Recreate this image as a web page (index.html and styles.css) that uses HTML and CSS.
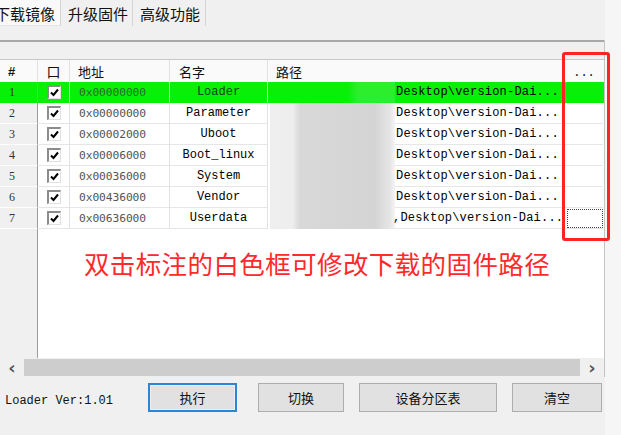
FILE: index.html
```html
<!DOCTYPE html>
<html lang="zh-CN">
<head>
<meta charset="utf-8">
<link rel="stylesheet" href="styles.css">
</head>
<body>
<div class="win">
  <div class="tabs">
    <div class="tab sel">下载镜像</div>
    <div class="tab">升级固件</div>
    <div class="tab">高级功能</div>
  </div>
  <div class="list">
    <div class="strip"></div>
    <div class="row head">
      <div class="c num">#</div>
      <div class="c chk">口</div>
      <div class="c addr">地址</div>
      <div class="c name hname">名字</div>
      <div class="c path"><span class="hp">路径</span></div>
      <div class="c last dots">...</div>
    </div>
    <div class="row green">
      <div class="c num">1</div>
      <div class="c chk"><span class="box"><svg viewBox="0 0 11 11" width="11" height="11"><path d="M2 5.5 L4.5 8 L9 2.5" fill="none" stroke="#000" stroke-width="2"/></svg></span></div>
      <div class="c addr">0x00000000</div>
      <div class="c name">Loader</div>
      <div class="c path"><span class="blur"></span><span class="pt">Desktop\version-Dai...</span></div>
      <div class="c last"></div>
    </div>
    <div class="row">
      <div class="c num">2</div>
      <div class="c chk"><span class="box"><svg viewBox="0 0 11 11" width="11" height="11"><path d="M2 5.5 L4.5 8 L9 2.5" fill="none" stroke="#000" stroke-width="2"/></svg></span></div>
      <div class="c addr">0x00000000</div>
      <div class="c name">Parameter</div>
      <div class="c path"><span class="blur"></span><span class="pt">Desktop\version-Dai...</span></div>
      <div class="c last"></div>
    </div>
    <div class="row">
      <div class="c num">3</div>
      <div class="c chk"><span class="box"><svg viewBox="0 0 11 11" width="11" height="11"><path d="M2 5.5 L4.5 8 L9 2.5" fill="none" stroke="#000" stroke-width="2"/></svg></span></div>
      <div class="c addr">0x00002000</div>
      <div class="c name">Uboot</div>
      <div class="c path"><span class="blur"></span><span class="pt">Desktop\version-Dai...</span></div>
      <div class="c last"></div>
    </div>
    <div class="row">
      <div class="c num">4</div>
      <div class="c chk"><span class="box"><svg viewBox="0 0 11 11" width="11" height="11"><path d="M2 5.5 L4.5 8 L9 2.5" fill="none" stroke="#000" stroke-width="2"/></svg></span></div>
      <div class="c addr">0x00006000</div>
      <div class="c name">Boot_linux</div>
      <div class="c path"><span class="blur"></span><span class="pt">Desktop\version-Dai...</span></div>
      <div class="c last"></div>
    </div>
    <div class="row">
      <div class="c num">5</div>
      <div class="c chk"><span class="box"><svg viewBox="0 0 11 11" width="11" height="11"><path d="M2 5.5 L4.5 8 L9 2.5" fill="none" stroke="#000" stroke-width="2"/></svg></span></div>
      <div class="c addr">0x00036000</div>
      <div class="c name">System</div>
      <div class="c path"><span class="blur"></span><span class="pt">Desktop\version-Dai...</span></div>
      <div class="c last"></div>
    </div>
    <div class="row">
      <div class="c num">6</div>
      <div class="c chk"><span class="box"><svg viewBox="0 0 11 11" width="11" height="11"><path d="M2 5.5 L4.5 8 L9 2.5" fill="none" stroke="#000" stroke-width="2"/></svg></span></div>
      <div class="c addr">0x00436000</div>
      <div class="c name">Vendor</div>
      <div class="c path"><span class="blur"></span><span class="pt">Desktop\version-Dai...</span></div>
      <div class="c last"></div>
    </div>
    <div class="row">
      <div class="c num">7</div>
      <div class="c chk"><span class="box"><svg viewBox="0 0 11 11" width="11" height="11"><path d="M2 5.5 L4.5 8 L9 2.5" fill="none" stroke="#000" stroke-width="2"/></svg></span></div>
      <div class="c addr">0x00636000</div>
      <div class="c name">Userdata</div>
      <div class="c path"><span class="blur"></span><span class="pt comma">,Desktop\version-Dai...</span></div>
      <div class="c last"><span class="focus"></span></div>
    </div>
    <div class="empty">
      <div class="ecol"></div>
      <div class="earea"><p class="note">双击标注的白色框可修改下载的固件路径</p></div>
    </div>
    <div class="hscroll">
      <span class="arr">&lsaquo;</span>
      <span class="track"></span>
      <span class="arr">&rsaquo;</span>
    </div>
  </div>
  <div class="footer">
    <span class="ver">Loader Ver:1.01</span>
    <button class="btn b1 focused">执行</button>
    <button class="btn b2">切换</button>
    <button class="btn b3">设备分区表</button>
    <button class="btn b4">清空</button>
  </div>
  <div class="redbox"></div>
</div>
</body>
</html>
```
FILE: styles.css
```css
* { box-sizing: border-box; }
html, body { margin: 0; padding: 0; }
body {
  width: 621px;
  height: 435px;
  overflow: hidden;
  background: #f0f0f0;
  font-family: "Liberation Mono", "Noto Sans CJK SC", monospace;
}
.win {
  position: relative;
  width: 621px;
  height: 435px;
  background: linear-gradient(to right, #f0f0f0 0, #f0f0f0 605px, #f6f6f6 605px);
}
.tabs {
  display: flex;
  height: 26px;
  margin-bottom: 14px;
  margin-left: -8px;
}
.tab {
  font-family: "Noto Sans CJK SC", sans-serif;
  font-size: 15px;
  line-height: 27px;
  height: 26px;
  padding: 0 4px 0 7px;
  color: #111;
  border-right: 1px solid #d4d4d4;
  background: #f0f0f0;
  white-space: nowrap;
}
.tab.sel {
  background: #f9f9f9;
  padding: 0 5px 0 3px;
  border-bottom: 1px solid #e4e4e4;
}
.tab:last-child { padding-right: 5px; }
.list {
  width: 605px;
  border-right: 1px solid #c4c4c4;
  display: flex;
  flex-direction: column;
  background: #fff;
}
.strip {
  height: 20px;
  background: #f0f0f0;
  border-top: 2px solid #a8a8a8;
  border-bottom: 1px solid #c8c8c8;
}
.row {
  display: grid;
  grid-template-columns: 38px 32px 100px 98px 297px 38px;
  height: 21px;
  background: #fff;
}
.row.head {
  height: 22px;
  background: #fafafa;
}
.c {
  display: flex;
  align-items: center;
  border-right: 1px solid #e2e2e2;
  border-bottom: 1px solid #e6e6e6;
  font-size: 12px;
  color: #000;
  white-space: nowrap;
  overflow: hidden;
}
.head .c {
  font-family: "Noto Sans CJK SC", sans-serif;
  font-size: 13px;
  border-bottom: none;
  color: #111;
}
.num {
  background: #f0f0f0;
  border-right: 1px solid #9c9c9c;
  border-bottom: 1px solid #fdfdfd;
  padding-left: 9px;
  font-family: "Liberation Serif", serif;
  font-size: 12px;
  color: #333;
}
.head .num { background: #fafafa; border-right-color: #e2e2e2; font-family: "Liberation Sans", sans-serif; font-weight: bold; padding-left: 8px; }
.chk { justify-content: center; }
.head .chk { font-size: 14px; padding-left: 0; }
.box {
  width: 14px;
  height: 14px;
  background: #fff;
  border-top: 2px solid #8c8c8c;
  border-left: 2px solid #8c8c8c;
  border-right: 1px solid #e0e0e0;
  border-bottom: 1px solid #e0e0e0;
  display: flex;
  align-items: center;
  justify-content: center;
}
.addr {
  padding-left: 9px;
  font-family: "DejaVu Sans Mono", monospace;
  font-size: 11.3px;
  color: #555;
  letter-spacing: -0.1px;
}
.head .addr { padding-left: 8px; }
.name {
  justify-content: center;
  font-size: 12px;
  color: #000;
}
.hname { justify-content: flex-start; padding-left: 9px; }
.path {
  padding: 0;
  border-bottom: none;
}
.hp { padding-left: 8px; }
.blur {
  width: 125px;
  height: 21px;
  margin-left: 2px;
  flex: none;
  background: linear-gradient(to right, #efefef 0, #eeeeee 18%, #d8d8d8 24%, #d4d4d4 84%, #e6e6e6 96%, #f4f4f4 100%);
}
.pt {
  flex: 1;
  height: 21px;
  line-height: 20px;
  border-bottom: 1px solid #e6e6e6;
  padding-left: 1px;
  font-size: 12px;
  color: #000;
  letter-spacing: 0.2px;
}
.pt.comma { margin-left: -3px; }
.last { justify-content: center; border-right: none; }
.dots { color: #8a8a8a; font-family: "Liberation Mono", monospace !important; font-size: 12px !important; padding-top: 4px; }
.focus {
  display: block;
  width: 36px;
  height: 19px;
  margin-left: 2px;
  border: 1px dotted #444;
}
.row.green, .row.green .c, .row.green .num { background: #08ef08; }
.row.green .c { border-bottom-color: #08ef08; }
.row.green .pt { border-bottom-color: #08ef08; }
.row.green .name { color: #154015; }
.row.green .addr { color: #2d6a2d; }
.row.green .blur {
  background: linear-gradient(to right, #08ef08 0, #08ef08 62%, #2cee2c 70%, #2cee2c 100%);
}
.empty {
  display: flex;
  height: 129px;
}
.ecol {
  width: 38px;
  background: #f0f0f0;
  border-right: 1px solid #9c9c9c;
}
.earea {
  flex: 1;
  background: #fff;
  border-right: 2px solid #fff;
}
.note {
  margin: 17px 0 0 0;
  text-align: center;
  font-family: "Noto Sans CJK SC", sans-serif;
  font-size: 25.5px;
  line-height: 34px;
  color: #ff2a2a;
  letter-spacing: 0.4px;
  padding-right: 6px;
}
.hscroll {
  height: 19px;
  display: flex;
  align-items: stretch;
  background: #f0f0f0;
}
.arr {
  width: 24px;
  display: flex;
  align-items: center;
  justify-content: center;
  font-family: "DejaVu Sans", sans-serif;
  font-size: 18px;
  font-weight: bold;
  color: #555;
  line-height: 1;
}
.track {
  flex: 1;
  margin: 1px 0;
  background: #cdcdcd;
}
.footer {
  display: flex;
  align-items: center;
  padding-top: 6px;
  height: 35px;
}
.ver {
  width: 148px;
  padding-left: 5px;
  padding-top: 6px;
  font-size: 12px;
  color: #111;
}
.btn {
  height: 29px;
  background: #e1e1e1;
  border: 1px solid #adadad;
  font-family: "Noto Sans CJK SC", sans-serif;
  font-size: 13px;
  color: #111;
  padding: 0;
}
.btn.focused { border: 2px solid #2b86d8; box-shadow: inset 0 0 0 1px #e8eef5; }
.b1 { width: 89px; }
.b2 { width: 86px; margin-left: 21px; }
.b3 { width: 138px; margin-left: 15px; }
.b4 { width: 90px; margin-left: 15px; }
.redbox {
  position: absolute;
  left: 562px;
  top: 52px;
  width: 48px;
  height: 189px;
  border: 3px solid #ff2424;
  border-radius: 3px;
}
```
